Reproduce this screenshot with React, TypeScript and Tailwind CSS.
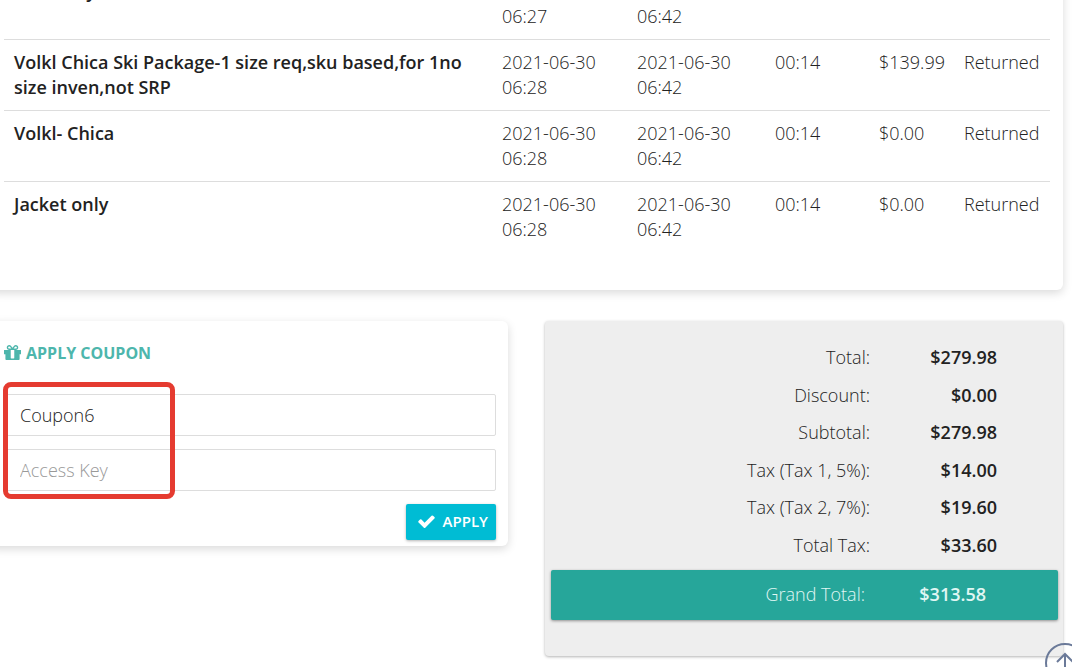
import { useState } from 'react';

const items = [
  { name: 'Pant only', start: '2021-06-30 06:27', end: '2021-06-30 06:42', duration: '00:14', price: '$139.99', status: 'Returned' },
  { name: 'Volkl Chica Ski Package-1 size req,sku based,for 1no size inven,not SRP', start: '2021-06-30 06:28', end: '2021-06-30 06:42', duration: '00:14', price: '$139.99', status: 'Returned' },
  { name: 'Volkl- Chica', start: '2021-06-30 06:28', end: '2021-06-30 06:42', duration: '00:14', price: '$0.00', status: 'Returned' },
  { name: 'Jacket only', start: '2021-06-30 06:28', end: '2021-06-30 06:42', duration: '00:14', price: '$0.00', status: 'Returned' },
];

const totals = [
  { label: 'Total:', value: '$279.98' },
  { label: 'Discount:', value: '$0.00' },
  { label: 'Subtotal:', value: '$279.98' },
  { label: 'Tax (Tax 1, 5%):', value: '$14.00' },
  { label: 'Tax (Tax 2, 7%):', value: '$19.60' },
  { label: 'Total Tax:', value: '$33.60' },
];

function GiftIcon() {
  return (
    <svg className="w-[17px] h-[15px] mb-0.5" viewBox="128 192 1536 1344" fill="currentColor" aria-hidden="true">
      <path d="M1056 1356v-716h-320v716q0 25 18 38.5t46 13.5h192q28 0 46-13.5t18-38.5zm-456-844h195l-126-161q-26-31-69-31-40 0-68 28t-28 68 28 68 68 28zm688-96q0-40-28-68t-68-28q-43 0-69 31l-125 161h194q40 0 68-28t28-68zm376 256v320q0 14-9 23t-23 9h-96v416q0 40-28 68t-68 28h-1088q-40 0-68-28t-28-68v-416h-96q-14 0-23-9t-9-23v-320q0-14 9-23t23-9h440q-93 0-158.5-65.5t-65.5-158.5 65.5-158.5 158.5-65.5q107 0 168 77l128 165 128-165q61-77 168-77 93 0 158.5 65.5t65.5 158.5-65.5 158.5-158.5 65.5h440q14 0 23 9t9 23z" />
    </svg>
  );
}

function CheckIcon() {
  return (
    <svg className="w-[17px] h-[13px]" viewBox="121 298 1550 1224" fill="currentColor" aria-hidden="true">
      <path d="M1671 566q0 40-28 68l-724 724-136 136q-28 28-68 28t-68-28l-136-136-362-362q-28-28-28-68t28-68l136-136q28-28 68-28t68 28l294 295 656-657q28-28 68-28t68 28l136 136q28 28 28 68z" />
    </svg>
  );
}

function ItemsTable() {
  return (
    <section className="bg-white rounded-md shadow-[0_3px_10px_rgba(0,0,0,0.15)] pl-3.5 pr-[13px] pb-[38px]">
      <table className="w-full table-fixed border-collapse text-left">
        <colgroup>
          <col />
          <col className="w-[135px]" />
          <col className="w-[138px]" />
          <col className="w-[104px]" />
          <col className="w-[85px]" />
          <col className="w-24" />
        </colgroup>
        <tbody>
          {items.map((item) => (
            <tr key={item.name} className="border-t border-[#ddd] align-top">
              <th scope="row" className="p-2.5 font-semibold">{item.name}</th>
              <td className="p-2.5">{item.start}</td>
              <td className="p-2.5">{item.end}</td>
              <td className="p-2.5">{item.duration}</td>
              <td className="py-2.5 pl-2.5">{item.price}</td>
              <td className="py-2.5 pl-2.5">{item.status}</td>
            </tr>
          ))}
        </tbody>
      </table>
    </section>
  );
}

function CouponForm() {
  const [coupon, setCoupon] = useState('Coupon6');
  const [accessKey, setAccessKey] = useState('');

  return (
    <form
      className="bg-white rounded-md shadow-[0_3px_10px_rgba(0,0,0,0.15)] pl-3.5 pr-3 pt-5 pb-1.5"
      onSubmit={(e) => e.preventDefault()}
    >
      <h2 className="flex items-center gap-[5px] text-base leading-6 font-bold text-[#4db6ac]">
        <GiftIcon />
        APPLY COUPON
      </h2>
      <div className="relative mt-[29px] flex flex-col gap-[13px]">
        <input
          type="text"
          aria-label="Coupon"
          className="w-full h-[42px] px-[15px] border border-[#ddd] rounded-xs"
          value={coupon}
          onChange={(e) => setCoupon(e.target.value)}
        />
        <input
          type="text"
          aria-label="Access Key"
          placeholder="Access Key"
          className="w-full h-[42px] px-[15px] border border-[#ddd] rounded-xs placeholder:text-[#999]"
          value={accessKey}
          onChange={(e) => setAccessKey(e.target.value)}
        />
        <div className="absolute -left-px -top-3 w-[172px] h-[117px] border-5 border-[#e53b30] rounded-lg pointer-events-none" />
      </div>
      <div className="mt-[13px] flex justify-end">
        <button
          type="submit"
          className="flex items-center gap-2 h-9 pl-3 pr-2 pb-0.5 rounded-xs bg-[#00bcd4] text-white text-[15px] font-semibold shadow-[0_1px_3px_rgba(0,0,0,0.3)]"
        >
          <CheckIcon />
          APPLY
        </button>
      </div>
    </form>
  );
}

function OrderTotals() {
  return (
    <section className="bg-[#eee] rounded-sm shadow-[0_1px_3px_rgba(0,0,0,0.3)] pl-1.5 pr-[5px] pt-[18px] pb-9">
      <dl className="h-[225px] flex flex-col pr-[61px]">
        {totals.map((row) => (
          <div key={row.label} className="flex-1 flex items-center text-right">
            <dt className="flex-1">{row.label}</dt>
            <dd className="w-[127px] font-semibold">{row.value}</dd>
          </div>
        ))}
      </dl>
      <dl className="mt-1.5 h-[50px] pb-0.5 flex items-center text-right pr-[72px] rounded-xs bg-[#26a69a] text-[#e0f7f4] shadow-[0_1px_3px_rgba(0,0,0,0.4)]">
        <dt className="flex-1">Grand Total:</dt>
        <dd className="w-[121px] font-semibold">$313.58</dd>
      </dl>
    </section>
  );
}

export default function App() {
  return (
    <div className="min-h-screen overflow-hidden bg-white text-[#222] text-lg leading-[25px] font-light font-['Open_Sans',sans-serif]">
      <main className="-mt-8 -ml-2.5 pr-[9px] pb-2.5">
        <ItemsTable />
        <div className="mt-[31px] grid grid-cols-2 gap-[37px] items-start">
          <CouponForm />
          <OrderTotals />
        </div>
      </main>
      <button type="button" aria-label="Back to top" className="fixed -right-[13px] -bottom-4 text-[#6b7a99]">
        <svg className="size-10" viewBox="0 0 40 40" fill="none" stroke="currentColor" strokeWidth="2" aria-hidden="true">
          <circle cx="20" cy="20" r="19" />
          <path d="M20 31V11M12 19l8-8 8 8" />
        </svg>
      </button>
    </div>
  );
}
